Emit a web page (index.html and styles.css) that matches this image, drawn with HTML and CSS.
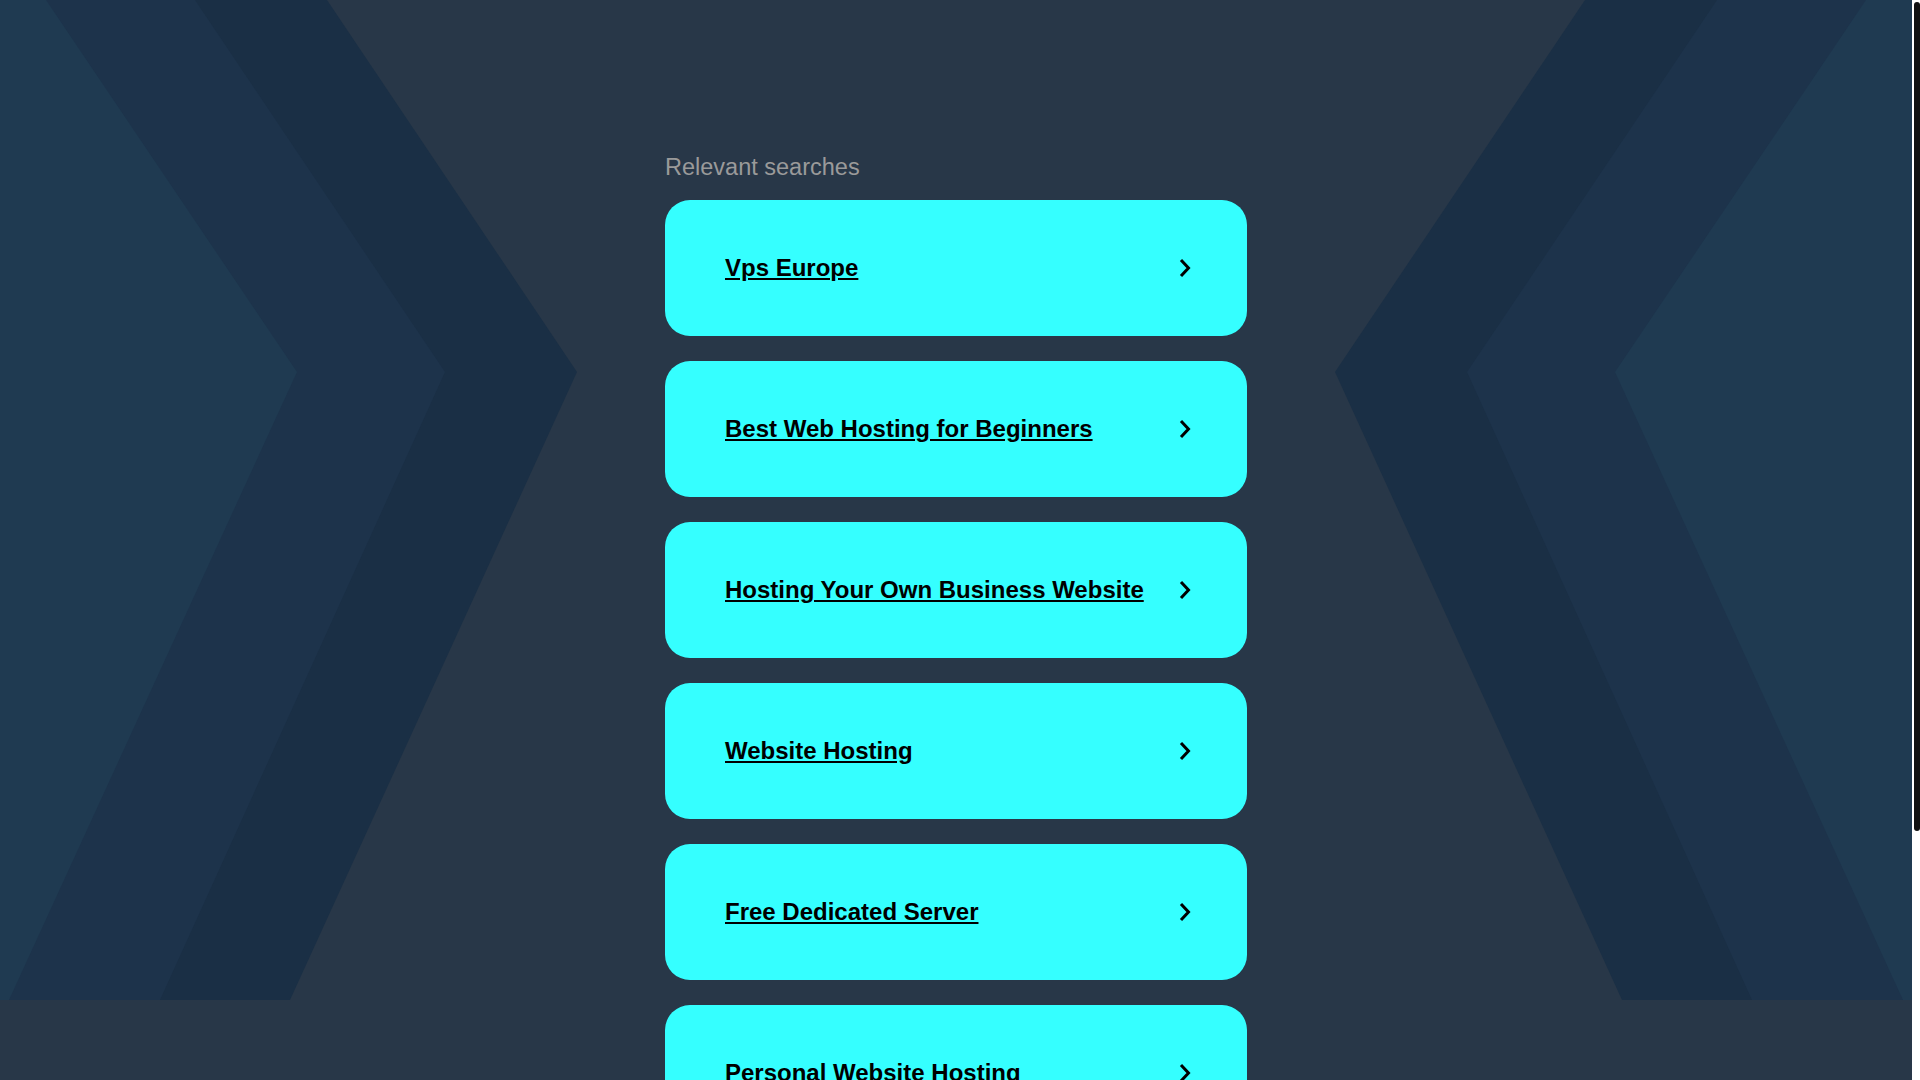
FILE: index.html
```html
<!DOCTYPE html>
<html lang="en">
<head>
<meta charset="utf-8">
<title>Relevant searches</title>
<link rel="stylesheet" href="styles.css">
</head>
<body>
<div class="page">
  <svg class="bg" viewBox="0 0 1912 1000" preserveAspectRatio="none" aria-hidden="true">
    <polygon class="c-outer" points="0,0 327,0 577,372 290,1000 0,1000"/>
    <polygon class="c-mid" points="0,0 195,0 445,372 160,1000 0,1000"/>
    <polygon class="c-inner" points="0,0 46,0 297,372 9,1000 0,1000"/>
    <polygon class="c-outer" points="1912,0 1585,0 1335,372 1622,1000 1912,1000"/>
    <polygon class="c-mid" points="1912,0 1717,0 1467,372 1752,1000 1912,1000"/>
    <polygon class="c-inner" points="1912,0 1866,0 1615,372 1903,1000 1912,1000"/>
  </svg>
  <main class="content">
    <p class="label">Relevant searches</p>
    <ul class="list">
      <li><a class="card" href="#"><span class="card-text">Vps Europe</span><svg class="chev" viewBox="0 0 12 20"><polyline points="2,2 9.5,10 2,18"/></svg></a></li>
      <li><a class="card" href="#"><span class="card-text">Best Web Hosting for Beginners</span><svg class="chev" viewBox="0 0 12 20"><polyline points="2,2 9.5,10 2,18"/></svg></a></li>
      <li><a class="card" href="#"><span class="card-text">Hosting Your Own Business Website</span><svg class="chev" viewBox="0 0 12 20"><polyline points="2,2 9.5,10 2,18"/></svg></a></li>
      <li><a class="card" href="#"><span class="card-text">Website Hosting</span><svg class="chev" viewBox="0 0 12 20"><polyline points="2,2 9.5,10 2,18"/></svg></a></li>
      <li><a class="card" href="#"><span class="card-text">Free Dedicated Server</span><svg class="chev" viewBox="0 0 12 20"><polyline points="2,2 9.5,10 2,18"/></svg></a></li>
      <li><a class="card" href="#"><span class="card-text">Personal Website Hosting</span><svg class="chev" viewBox="0 0 12 20"><polyline points="2,2 9.5,10 2,18"/></svg></a></li>
    </ul>
  </main>
</div>
<div class="scrollbar" aria-hidden="true"><div class="scrollbar-thumb"></div></div>
</body>
</html>
```
FILE: styles.css
```css
html, body {
  margin: 0;
  padding: 0;
}

body {
  background: #283748;
  font-family: "Liberation Sans", Arial, sans-serif;
}

.page {
  position: relative;
  width: calc(100% - 8px);
  min-height: 1402px;
}

.bg {
  position: absolute;
  top: 0;
  left: 0;
  width: 100%;
  height: 1000px;
  display: block;
  z-index: 0;
}

.c-outer { fill: #1a2f45; }
.c-mid { fill: #1d334b; }
.c-inner { fill: #1f3a51; }

.content {
  position: relative;
  z-index: 1;
  width: 582px;
  margin: 0 auto;
  padding: 153px 0 241px;
}

.label {
  margin: 0 0 19px;
  font-size: 23.5px;
  line-height: 28px;
  color: #9a9a9a;
}

.list {
  list-style: none;
  margin: 0;
  padding: 0;
  display: flex;
  flex-direction: column;
  gap: 25px;
}

.card {
  display: flex;
  align-items: center;
  justify-content: space-between;
  height: 136px;
  box-sizing: border-box;
  padding: 0 56px 0 60px;
  background: #35ffff;
  border-radius: 25px;
  color: #000000;
  text-decoration: none;
}

.card-text {
  font-size: 24px;
  font-weight: bold;
  line-height: 28px;
  text-decoration: underline;
}

.chev {
  flex: none;
  width: 12px;
  height: 20px;
  display: block;
}

.chev polyline {
  fill: none;
  stroke: #000000;
  stroke-width: 3;
}

.scrollbar {
  position: fixed;
  top: 0;
  right: 0;
  width: 8px;
  height: 100vh;
  background: #ffffff;
  z-index: 10;
}

.scrollbar-thumb {
  margin: 2px 0 0 2px;
  height: 829px;
  background: #111111;
  border-radius: 3px;
}
```
